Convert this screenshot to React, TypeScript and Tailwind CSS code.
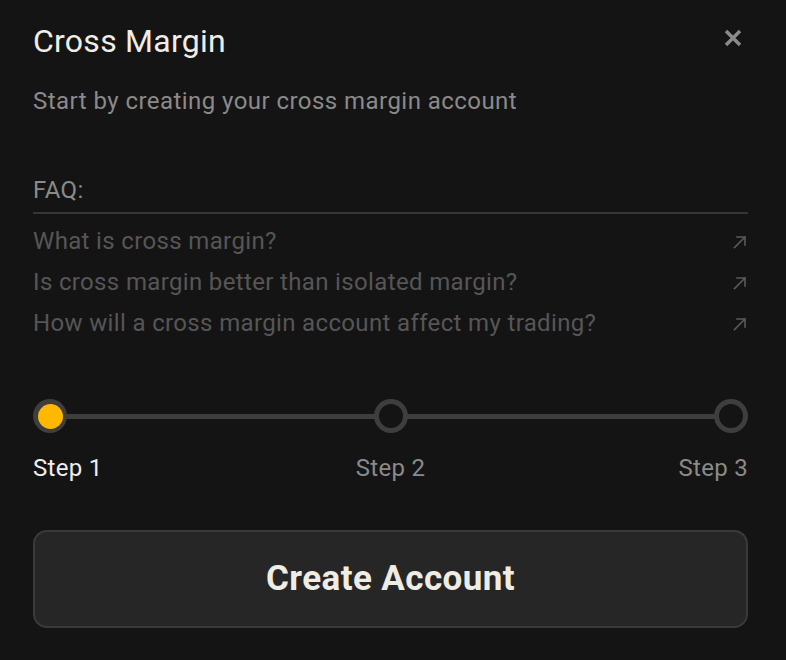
import React from "react";

const font = { fontFamily: "Roboto, 'Noto Sans', sans-serif" };

function Arrow() {
  return (
    <svg width="16" height="16" viewBox="0 0 16 16" fill="none" className="shrink-0">
      <path d="M2.5 13.5L13 3M5 3H13V11" stroke="#5a5a5a" strokeWidth="1.6" strokeLinecap="square" />
    </svg>
  );
}

export default function App() {
  const faqs = [
    "What is cross margin?",
    "Is cross margin better than isolated margin?",
    "How will a cross margin account affect my trading?",
  ];
  return (
    <div className="w-[786px] h-[660px] bg-[#141414] pl-[33px] pr-[38px] pt-[21px]" style={font}>
      <div className="flex items-start justify-between">
        <h1 className="text-[32px] leading-[40px] tracking-[0.25px] text-[#f0ede6]">Cross Margin</h1>
        <svg width="20" height="20" viewBox="0 0 20 20" className="mt-[7px] mr-[5px]">
          <path d="M3 3L17 17M17 3L3 17" stroke="#8a8a8a" strokeWidth="3.5" strokeLinecap="butt" />
        </svg>
      </div>
      <p className="mt-[24px] text-[24px] leading-[32px] tracking-[0.45px] text-[#8a8a8a]">
        Start by creating your cross margin account
      </p>
      <div className="mt-[57px] text-[24px] leading-[32px] tracking-[0.4px] text-[#8a8a8a] pb-[6px] border-b-2 border-[#363636]">
        FAQ:
      </div>
      <div className="mt-[7px] flex flex-col">
        {faqs.map((q) => (
          <div key={q} className="flex items-center justify-between h-[41px] text-[24px] leading-[41px] tracking-[0.35px] text-[#565656]">
            <span>{q}</span>
            <Arrow />
          </div>
        ))}
      </div>
      <div className="mt-[55px] relative h-[34px] flex items-center justify-between">
        <div className="absolute left-[17px] right-[17px] top-[15px] h-[5px] bg-[#3e3e3e]" />
        <div className="relative w-[34px] h-[34px] rounded-full bg-[#3e3e3e] flex items-center justify-center">
          <div className="w-[25px] h-[25px] rounded-full bg-[#ffb800]" />
        </div>
        <div className="relative w-[34px] h-[34px] rounded-full bg-[#3e3e3e] flex items-center justify-center">
          <div className="w-[24px] h-[24px] rounded-full bg-[#141414]" />
        </div>
        <div className="relative w-[34px] h-[34px] rounded-full bg-[#3e3e3e] flex items-center justify-center">
          <div className="w-[24px] h-[24px] rounded-full bg-[#141414]" />
        </div>
      </div>
      <div className="mt-[19px] grid grid-cols-3 text-[24px] leading-[32px] tracking-[0.3px]">
        <span className="text-[#eeeeee]">Step 1</span>
        <span className="text-[#8a8a8a] text-center">Step 2</span>
        <span className="text-[#8a8a8a] text-right">Step 3</span>
      </div>
      <button className="mt-[46px] w-full h-[98px] rounded-[14px] bg-[#262626] border-2 border-[#3a3a3a] text-[35px] tracking-[0.4px] font-bold text-[#efece4]">
        Create Account
      </button>
    </div>
  );
}
